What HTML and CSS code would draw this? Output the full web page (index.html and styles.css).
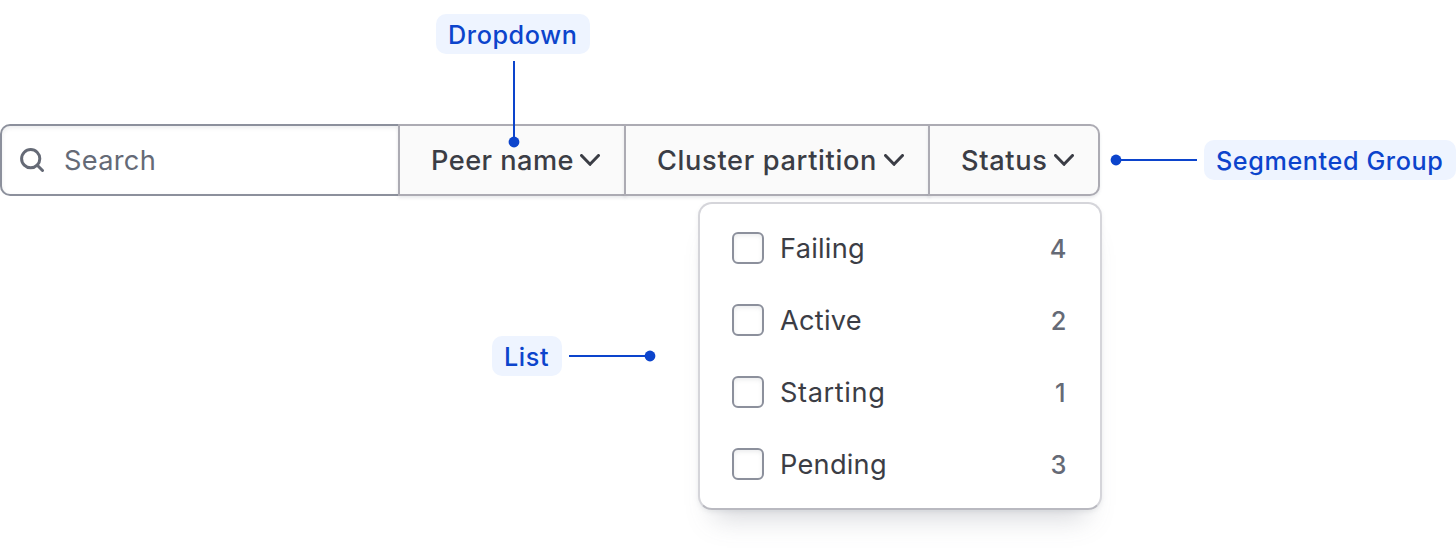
FILE: index.html
```html
<!DOCTYPE html>
<html lang="en">
<head>
<meta charset="utf-8">
<title>Filter bar anatomy</title>
<link rel="stylesheet" href="styles.css">
</head>
<body>
<main class="anatomy">
  <div class="callout callout-dropdown">
    <span class="tag">Dropdown</span>
    <svg class="pointer" width="12" height="88" viewBox="0 0 12 88"><path d="M6 0v82" stroke="currentColor" stroke-width="2"/><circle cx="6" cy="81" r="5.400" fill="currentColor"/></svg>
  </div>
  <div class="bar-row">
    <div class="segmented">
      <label class="search">
        <svg width="24" height="24" viewBox="0 0 24 24" fill="none" stroke="currentColor" stroke-width="3" stroke-linecap="round"><circle cx="10.700" cy="10.700" r="9.100"/><path d="M17.300 17.300l5.200 5.200"/></svg>
        <span class="placeholder">Search</span>
      </label>
      <button class="segment peer"><span class="label">Peer name</span><svg class="chevron" width="20" height="12" viewBox="0 0 20 12"><path d="M1.500 1.500L10 10.300L18.500 1.500"/></svg></button>
      <button class="segment cluster"><span class="label">Cluster partition</span><svg class="chevron" width="20" height="12" viewBox="0 0 20 12"><path d="M1.500 1.500L10 10.300L18.500 1.500"/></svg></button>
      <button class="segment status"><span class="label">Status</span><svg class="chevron" width="20" height="12" viewBox="0 0 20 12"><path d="M1.500 1.500L10 10.300L18.500 1.500"/></svg></button>
    </div>
    <div class="callout-side">
      <svg class="pointer" width="87" height="12" viewBox="0 0 87 12"><path d="M6 6h81" stroke="currentColor" stroke-width="2"/><circle cx="6" cy="6" r="5.400" fill="currentColor"/></svg>
      <span class="tag tag-group">Segmented Group</span>
    </div>
  </div>
  <div class="list-row">
    <div class="callout-list">
      <span class="tag tag-list">List</span>
      <svg class="pointer" width="87" height="12" viewBox="0 0 87 12"><path d="M0 6h81" stroke="currentColor" stroke-width="2"/><circle cx="81" cy="6" r="5.400" fill="currentColor"/></svg>
    </div>
    <ul class="panel">
      <li class="option"><span class="checkbox"></span><span class="name">Failing</span><span class="count">4</span></li>
      <li class="option"><span class="checkbox"></span><span class="name">Active</span><span class="count">2</span></li>
      <li class="option"><span class="checkbox"></span><span class="name name-wide">Starting</span><span class="count count-one">1</span></li>
      <li class="option"><span class="checkbox"></span><span class="name">Pending</span><span class="count">3</span></li>
    </ul>
  </div>
</main>
</body>
</html>
```
FILE: styles.css
```css
* { box-sizing: border-box; }
body { margin: 0; background: #fff; font-family: Inter, "Liberation Sans", sans-serif; }
svg { display: block; flex: none; }
.anatomy { position: relative; width: 1456px; height: 550px; padding-top: 124px; overflow: hidden; }
.tag { display: flex; align-items: center; height: 40px; border-radius: 10px; background: #eef4ff; color: #0c44cc; font-size: 25.2px; font-weight: 500; line-height: 38px; padding: 2px 0 0 12px; letter-spacing: .6px; white-space: nowrap; }
.pointer { color: #0c44cc; }
.callout { position: absolute; top: 14px; left: 436px; width: 154px; display: flex; flex-direction: column; align-items: center; gap: 7px; z-index: 2; }
.callout .tag { width: 154px; }
.callout .pointer { margin-left: 2px; }
.bar-row { display: flex; height: 72px; }
.segmented { display: flex; width: 1100px; color: #3b3d45; }
.search { display: flex; align-items: center; gap: 20px; width: 400px; padding-left: 18px; border: 2px solid #8c909c; border-right: 0; border-radius: 10px 0 0 10px; box-shadow: inset 0 2px 4px rgba(101,106,118,.12); color: #656a76; font-size: 27.2px; letter-spacing: .3px; }
.placeholder, .label, .name { padding-top: 1px; }
.segment { display: flex; align-items: center; gap: 7px; height: 72px; margin: 0 0 0 -2px; padding: 0 0 0 31px; border: 2px solid #acabb3; background: #fafafa; color: inherit; font: 500 27.2px Inter, "Liberation Sans", sans-serif; white-space: nowrap; box-shadow: 0 2px 3px rgba(101,106,118,.14); }
.label { text-align: left; }
.peer { width: 228px; letter-spacing: .45px; }
.peer .label { width: 142px; }
.cluster { width: 306px; letter-spacing: .65px; }
.cluster .label { width: 220px; }
.status { width: 172px; border-radius: 0 10px 10px 0; letter-spacing: .65px; }
.status .label { width: 86px; }
.chevron path { fill: none; stroke: currentColor; stroke-width: 3; stroke-linecap: round; stroke-linejoin: round; }
.callout-side { display: flex; align-items: center; gap: 7px; margin-left: 10px; }
.tag-group { width: 252px; }
.list-row { display: flex; justify-content: flex-end; width: 1102px; padding-top: 6px; }
.callout-list { display: flex; align-items: center; gap: 7px; height: 40px; margin: 134px 42px 0 0; }
.tag-list { width: 70px; }
.panel { list-style: none; width: 404px; height: 308px; margin: 0; padding: 8px 33.5px 0 32px; border: 2px solid #d5d5da; border-bottom-color: #b9b9c0; border-radius: 14px; background: #fff; box-shadow: 0 2px 4px rgba(101,106,118,.1), 0 24px 26px -16px rgba(101,106,118,.26); }
.option { display: flex; align-items: center; height: 72px; color: #3b3d45; font-size: 27.2px; letter-spacing: .25px; }
.checkbox { width: 32px; height: 32px; border: 2px solid #8c909c; border-radius: 6px; box-shadow: inset 0 2px 4px rgba(101,106,118,.12); }
.name { margin-left: 16px; }
.name-wide { letter-spacing: .6px; }
.count { margin-left: auto; padding-top: 1px; color: #656a76; font-size: 25.4px; font-weight: 500; letter-spacing: 0; }
.count-one { padding-right: 1px; }
```
